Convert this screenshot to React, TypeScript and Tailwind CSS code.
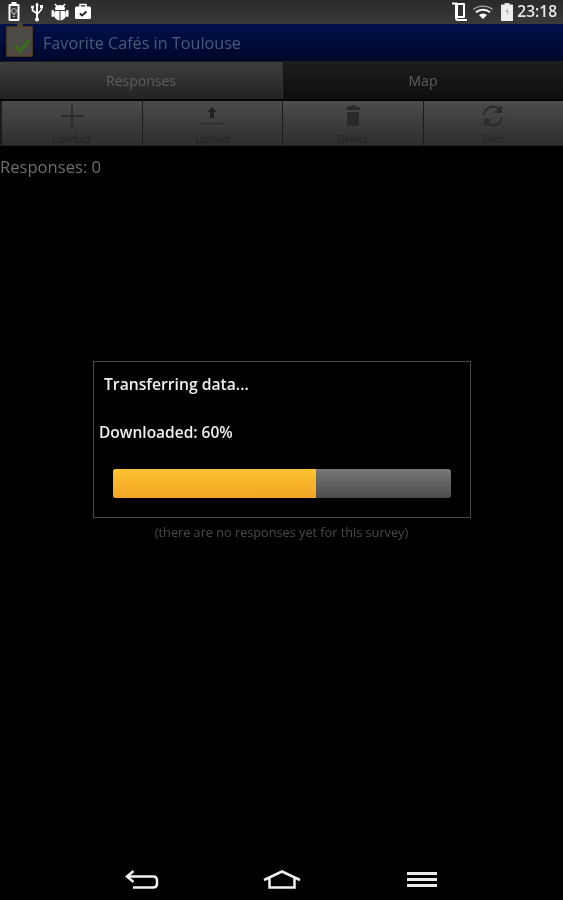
import React from 'react';

function StatusIcons() {
  return (
    <div className="flex items-center pl-[7px]">
      {/* battery with bulb */}
      <svg width="14" height="20" viewBox="0 0 14 20">
        <rect x="4.5" y="0" width="5" height="2.5" fill="#fff" />
        <rect x="1.5" y="2" width="11" height="17" rx="1" fill="#fff" />
        <rect x="3.5" y="4" width="7" height="13" fill="#3a3a3a" />
        <circle cx="7" cy="9" r="2.4" fill="none" stroke="#bbb" strokeWidth="1" />
        <path d="M6 12.5h2M6 14.5h2" stroke="#bbb" strokeWidth="1" />
      </svg>
      {/* usb */}
      <svg width="14" height="20" viewBox="0 0 14 20" className="ml-[9px]">
        <path d="M7 1.5v17" stroke="#fff" strokeWidth="2" />
        <path d="M7 0.5l2 3h-4z" fill="#fff" />
        <path d="M2.5 5v3.5l4.5 3M11.5 4.5v3l-4.5 5" stroke="#fff" strokeWidth="1.6" fill="none" />
        <circle cx="2.5" cy="5" r="1.6" fill="#fff" />
        <rect x="10" y="3" width="3" height="3" fill="#fff" />
        <circle cx="7" cy="17.5" r="2" fill="#fff" />
      </svg>
      {/* android bug */}
      <svg width="18" height="18" viewBox="0 0 18 18" className="ml-[7px]">
        <path d="M4 1l2.5 3M14 1l-2.5 3" stroke="#fff" strokeWidth="1.5" />
        <ellipse cx="9" cy="5.5" rx="5" ry="3.5" fill="#fff" />
        <ellipse cx="9" cy="11.5" rx="6" ry="6" fill="#fff" />
        <rect x="0.5" y="7" width="2.5" height="7" rx="1.2" fill="#fff" />
        <rect x="15" y="7" width="2.5" height="7" rx="1.2" fill="#fff" />
        <path d="M9 7v11M3 7.5h12" stroke="#3a3a3a" strokeWidth="1" />
      </svg>
      {/* clipboard check */}
      <svg width="18" height="18" viewBox="0 0 18 18" className="ml-[5px]">
        <path d="M6 4V1.5h6V4" stroke="#fff" strokeWidth="1.5" fill="none" />
        <rect x="1" y="3.5" width="16" height="12.5" rx="1.5" fill="#fff" />
        <path d="M6 10.5l2 2 4.5-4" stroke="#222" strokeWidth="1.8" fill="none" />
      </svg>
    </div>
  );
}

function StatusRight() {
  return (
    <div className="flex items-center pr-[6px]">
      {/* rotation lock */}
      <svg width="18" height="20" viewBox="0 0 18 20">
        <path d="M1 1.5h4v14c0 2 1 2.5 2 2.5h9" stroke="#fff" strokeWidth="2" fill="none" />
        <rect x="5" y="1" width="9" height="15" rx="1" fill="#fff" />
        <rect x="7" y="3" width="5" height="11" fill="#333" />
      </svg>
      {/* wifi */}
      <svg width="20" height="14" viewBox="0 0 20 14" className="ml-[4px]">
        <path d="M0.5 4.5C5.5 0 14.5 0 19.5 4.5" stroke="#a8a8a8" strokeWidth="1.4" fill="none" />
        <path d="M3 7.2C7 3.8 13 3.8 17 7.2" stroke="#fff" strokeWidth="2" fill="none" />
        <path d="M6 10c2.5-2 5.5-2 8 0L10 14z" fill="#fff" />
      </svg>
      {/* battery */}
      <svg width="12" height="18" viewBox="0 0 12 18" className="ml-[8px]">
        <rect x="3.5" y="0" width="5" height="2" fill="#ddd" />
        <rect x="0" y="1.5" width="12" height="16.5" rx="0.5" fill="#eee" />
        <path d="M6.5 4.5L4.5 9h2l-1 4 2.5-5H6.5z" fill="#aaa" />
      </svg>
      <span className="ml-[4px] text-[15.5px] leading-none font-semibold text-[#e8e8e8]">23:18</span>
    </div>
  );
}

function TitleIcon() {
  return (
    <svg width="28" height="36" viewBox="0 0 28 36" className="mt-[-5px] shrink-0">
      <path d="M11 2l3-2 3 2v4h-6z" fill="#4a4638" />
      <rect x="1" y="5" width="25" height="29" fill="#4c4a44" stroke="#5e4320" strokeWidth="1.5" />
      <path d="M9 24l5 5 9-11" stroke="#3a6b1e" strokeWidth="3.5" fill="none" />
    </svg>
  );
}

const tools = [
  {
    label: 'Conduct',
    icon: (
      <svg width="24" height="24" viewBox="0 0 24 24">
        <path d="M12 1v22M1 12h22" stroke="#2c2c2c" strokeWidth="2" />
      </svg>
    ),
  },
  {
    label: 'Upload',
    icon: (
      <svg width="24" height="24" viewBox="0 0 24 24">
        <path d="M12 3l4.500 5H14v6h-4V8H7.500z" fill="#222" />
        <path d="M1 19.500h22" stroke="#2c2c2c" strokeWidth="1.500" />
      </svg>
    ),
  },
  {
    label: 'Delete',
    icon: (
      <svg width="24" height="24" viewBox="0 0 24 24">
        <path d="M9 2l6-1v2l4 .5V6H5V3.500z" fill="#2a2a2a" />
        <path d="M6 8h12v13a1 1 0 0 1-1 1H7a1 1 0 0 1-1-1z" fill="#2a2a2a" />
      </svg>
    ),
  },
  {
    label: 'Sync',
    icon: (
      <svg width="24" height="24" viewBox="0 0 24 24">
        <path d="M3 11C3.500 5 9 1.500 14.500 3c1.500.4 3 1.400 4 2.500" stroke="#2c2c2c" strokeWidth="2" fill="none" />
        <path d="M21 1v8h-8z" fill="#2c2c2c" />
        <path d="M21 13c-.5 6-6 9.500-11.500 8-1.500-.4-3-1.400-4-2.500" stroke="#2c2c2c" strokeWidth="2" fill="none" />
        <path d="M3 23v-8h8z" fill="#2c2c2c" />
      </svg>
    ),
  },
];

export default function App() {
  return (
    <div className="relative h-[900px] w-[563px] overflow-hidden bg-black blur-[0.6px] font-['Open_Sans',sans-serif]">
      {/* status bar */}
      <div className="flex h-[24px] items-center justify-between bg-gradient-to-b from-[#2a2a2a] to-[#3a3a3a]">
        <StatusIcons />
        <StatusRight />
      </div>

      {/* title bar */}
      <div className="flex h-[37px] items-center bg-gradient-to-b from-[#00104a] to-[#00072a] pl-[6px]">
        <TitleIcon />
        <span className="ml-[9px] pt-[1px] text-[16.2px] leading-none font-medium text-[#4a5a78]">Favorite Cafés in Toulouse</span>
      </div>

      {/* tabs */}
      <div className="flex h-[38px] border-t border-[#1c1c1c]">
        <div className="flex w-[282px] items-center justify-center bg-gradient-to-b from-[#3e3e3e] to-[#232323] text-[14px] text-[#5e5e5e]">
          Responses
        </div>
        <div className="flex flex-1 items-center justify-center border-l border-[#333] bg-gradient-to-b from-[#1d1d1d] to-[#0e0e0e] text-[14px] text-[#5e5e5e]">
          Map
        </div>
      </div>

      {/* toolbar */}
      <div className="mt-[2px] flex h-[45px] gap-[1px] border-b border-[#222] bg-[#1c1c1c] pl-[2px]">
        {tools.map((t) => (
          <div
            key={t.label}
            className="flex flex-1 flex-col items-center bg-gradient-to-b from-[#4c4c4c] to-[#2e2e2e] pt-[3px]"
          >
            {t.icon}
            <span className="mt-[6px] text-[10px] leading-none text-[#222]">{t.label}</span>
          </div>
        ))}
      </div>

      {/* content */}
      <div className="mt-[11px] text-[16.6px] leading-[20px] text-[#6e6e6e]">Responses: 0</div>
      <div className="mt-[347px] text-center text-[12.7px] leading-[16px] text-[#4a4a4a]">
        (there are no responses yet for this survey)
      </div>

      {/* progress dialog */}
      <div className="absolute left-[93px] top-[361px] h-[157px] w-[378px] border border-[#4a4a4a] bg-black">
        <div className="pl-[10px] pt-[11px] text-[15.7px] leading-[22px] font-semibold text-[#f0f0f0]">Transferring data...</div>
        <div className="mt-[26px] pl-[5px] text-[15.5px] leading-[22px] font-semibold text-[#f0f0f0]">Downloaded: 60%</div>
        <div className="mx-[19px] mt-[26px] flex h-[29px] overflow-hidden rounded-[3px] bg-gradient-to-b from-[#787878] to-[#4c4c4c]">
          <div className="h-full w-[60%] bg-gradient-to-b from-[#fdc332] to-[#f3a424]" />
        </div>
      </div>

      {/* nav bar */}
      <div className="absolute bottom-0 left-0 right-0 flex h-[45px] items-center bg-black pt-[4px]">
        <div className="flex w-[284px] justify-center">
          <svg width="34" height="20" viewBox="0 0 34 20">
            <path d="M2 6.500h26c3 0 4 2 4 4v3c0 2-1 4-4 4H8" stroke="#f0f0f0" strokeWidth="2.500" fill="none" />
            <path d="M8.500 1L2 6.500 8.500 12" stroke="#f0f0f0" strokeWidth="2.500" fill="none" />
          </svg>
        </div>
        <div className="ml-[-2px] flex w-[0px] justify-center">
          <svg width="38" height="19" viewBox="0 0 38 19" className="shrink-0">
            <path d="M1 10L19 1.500 37 10M6.500 8.500V17.500H31.500V8.500" stroke="#f0f0f0" strokeWidth="2.500" fill="none" />
          </svg>
        </div>
        <div className="ml-[125px] flex w-[30px] shrink-0 flex-col gap-[3px]">
          <div className="h-[3px] bg-[#ececec]" />
          <div className="h-[3px] bg-[#ececec]" />
          <div className="h-[3px] bg-[#ececec]" />
        </div>
      </div>
    </div>
  );
}
